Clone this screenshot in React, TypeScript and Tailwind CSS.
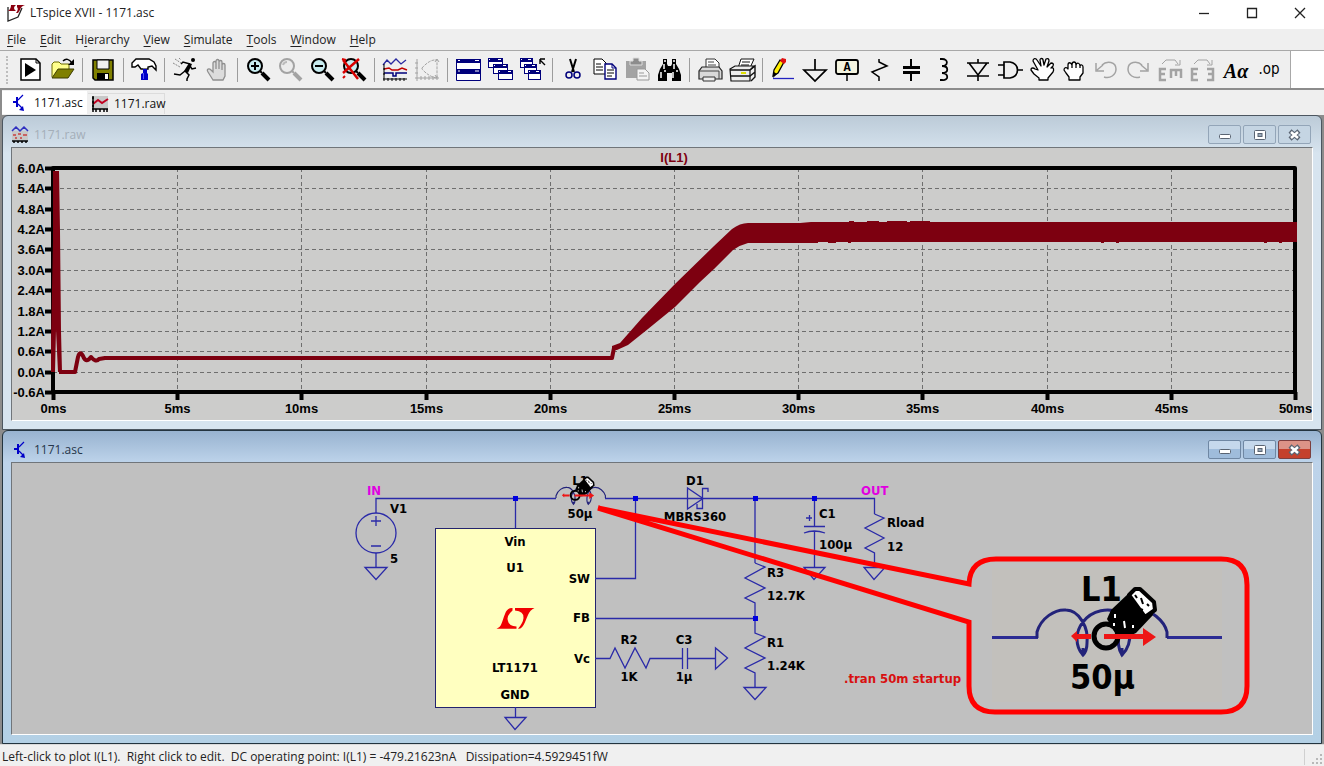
import type { ReactNode } from "react";
import clsx from "clsx";

type ToolDef = { name: string; icon: ReactNode; disabled?: boolean };

const NAVY = "#00007b";
const GREY = "#a3a3a3";
const WIRE = "#2a2aa8";
const TRACE = "#7d0010";

const menus = [
  ["", "F", "ile"],
  ["", "E", "dit"],
  ["H", "i", "erarchy"],
  ["", "V", "iew"],
  ["", "S", "imulate"],
  ["", "T", "ools"],
  ["", "W", "indow"],
  ["", "H", "elp"],
];

/* ---------- Toolbar icons, all on a 24x24 grid ---------- */

const Lens = ({ color = "#000", glass = "#c8ecf0", children }: { color?: string; glass?: string; children?: ReactNode }) => (
  <>
    <circle cx="9" cy="8" r="7" fill={glass} stroke={color} strokeWidth="2" />
    <path d="M14 13l2 2" stroke={color} strokeWidth="2" />
    <path d="M16 15l7 7" stroke={color} strokeWidth="4" />
    {children}
  </>
);

const MiniWin = ({ x, y, w = 14 }: { x: number; y: number; w?: number }) => (
  <>
    <rect x={x + 0.5} y={y + 0.5} width={w} height="9" fill="#fff" stroke={NAVY} />
    <rect x={x} y={y} width={w + 1} height="4" fill={NAVY} />
    <path d={`M${x + w - 4} ${y + 1.5}h3M${x + 1} ${y + 1.5}h1`} stroke="#fff" />
  </>
);

const groups: ToolDef[][] = [
  [
    {
      name: "Run script",
      icon: (
        <>
          <path d="M3 1h15l4 4v17H3z" fill="#fff" stroke="#000" strokeWidth="1.5" />
          <path d="M18 1v4h4" fill="none" stroke="#000" />
          <path d="M7 5v14l11-7z" />
        </>
      ),
    },
    {
      name: "Open",
      icon: (
        <>
          <path d="M2 19V6l2-2h5l2 2h8v5" fill="#ffff8c" stroke="#6b6b00" />
          <path d="M2 20l6-9h16l-6 9z" fill="#808000" stroke="#3c3c00" />
          <path d="M13 3c3-3 6-2 9 2" fill="none" stroke="#000" strokeWidth="1.5" />
          <path d="M24 1v6h-6z" />
        </>
      ),
    },
  ],
  [
    {
      name: "Save",
      icon: (
        <>
          <path d="M2 2h20v20H4l-2-2z" fill="#808000" stroke="#000" strokeWidth="1.5" />
          <path d="M6 2h12v9H6z" fill="#efefef" stroke="#000" />
          <path d="M6 15h12v7H6z" />
          <path d="M14 16h3v5h-3z" fill="#fff" />
        </>
      ),
    },
  ],
  [
    {
      name: "Control panel",
      icon: (
        <>
          <path d="M0 9V5l4-4h13l5 3 2 4v4l-4-4-4 1v2H9L6 7 3 9z" fill="#fff" stroke="#000" strokeWidth="1.4" />
          <path d="M11 10h4v4h-4z" fill="#777" />
          <path d="M11 11h4v4l1 1v6H9v-6l2-1z" fill="#0000c8" />
          <path d="M11.5 15v6" stroke="#5050ff" />
        </>
      ),
    },
  ],
  [
    {
      name: "Run",
      icon: (
        <>
          <circle cx="20" cy="2" r="2" />
          <path d="M16 5l3 1-4 9-4-2z" />
          <path d="M17 6L10 4 8 6M17 8l2 3 4-1M12 13l4 4-2 4v2M12 13l-5 4-6-1" fill="none" stroke="#000" strokeWidth="1.5" />
          <path d="M2 1l6 4M0 5l7 4M6 0l2 2" stroke="#888" strokeDasharray="2 1" />
        </>
      ),
    },
    {
      name: "Halt",
      disabled: true,
      icon: (
        <path
          d="M8 22L3 14c-2-3 1-4 3-2l2 2V5c0-2 3-2 3 0v6V3c0-2 3-2 3 0v8V4c0-2 3-2 3 0v8V7c0-2 3-2 3 0v11l-2 4z"
          fill="#dcdcdc"
          stroke="#8f8f8f"
          strokeWidth="1.3"
        />
      ),
    },
  ],
  [
    { name: "Zoom in", icon: <Lens><path d="M5 8h8M9 4v8" stroke="#000" strokeWidth="2" /></Lens> },
    { name: "Pan", disabled: true, icon: <Lens color={GREY} glass="#ececec"><path d="M5 7q1-3 4-3" fill="none" stroke="#bbb" strokeWidth="2" /></Lens> },
    { name: "Zoom back", icon: <Lens><path d="M5 8h8" stroke="#000" strokeWidth="2" /></Lens> },
    {
      name: "Zoom full extents",
      icon: (
        <Lens>
          <path d="M1 2l15 19M17 1L1 15" stroke="#d80000" strokeWidth="2.5" />
          <path d="M0 1l4 1M3 18l-2 2" stroke="#d80000" strokeWidth="2" />
        </Lens>
      ),
    },
  ],
  [
    {
      name: "Autorange",
      icon: (
        <>
          <path d="M0 7l4-5 4 4 5-5 5 5 5-4" fill="none" stroke="#2929a0" strokeWidth="1.3" />
          <path d="M1 11l5-1 3 2h6l4-2 5 2" fill="none" stroke="#c00000" strokeWidth="1.5" />
          <path d="M1 15h9v3h3v-3h11" fill="none" stroke={NAVY} strokeWidth="1.5" />
          <path d="M1 6v17M0 21h24M5 20v3M9 20v3M13 20v3M17 20v3M21 20v3M0 11h2M0 16h2" stroke="#000" />
        </>
      ),
    },
    {
      name: "FFT",
      disabled: true,
      icon: (
        <>
          <path d="M7 10q8-9 15-8v18q-8-1-15-9z" fill="none" stroke={GREY} strokeDasharray="3 1" />
          <path d="M2 1v22M0 20h24M6 18v4M10 18v4M14 18v4M18 18v4M22 18v4M0 5h3M0 10h3M0 15h3M22 1l-2 3M22 1l2 3M22 20l-2-3" stroke={GREY} />
        </>
      ),
    },
  ],
  [
    {
      name: "Tile windows",
      icon: (
        <>
          <path d="M0.5 1.5h24v21h-24z" fill="#fff" stroke={NAVY} />
          <path d="M0 1h25v4H0zM0 11h25v5H0z" fill={NAVY} />
          <path d="M2 2.5h2M19 2.5h4M2 13h2M19 13h4" stroke="#fff" />
        </>
      ),
    },
    { name: "Cascade windows", icon: <><MiniWin x={0} y={0} /><MiniWin x={5} y={6} /><MiniWin x={10} y={12} /></> },
    {
      name: "Close all",
      icon: (
        <>
          <MiniWin x={0} y={0} w={12} /><MiniWin x={4} y={6} w={12} /><MiniWin x={8} y={12} w={12} />
          <path d="M20 2l5 5M20 1h5M20 1v5" stroke="#000" strokeWidth="1.4" />
        </>
      ),
    },
  ],
  [
    {
      name: "Cut",
      icon: (
        <>
          <path d="M9 1l4 13M15 1l-4 13" stroke="#000" strokeWidth="2" />
          <circle cx="8" cy="17" r="3" fill="none" stroke={NAVY} strokeWidth="1.5" />
          <circle cx="16" cy="17" r="3" fill="none" stroke={NAVY} strokeWidth="1.5" />
        </>
      ),
    },
    {
      name: "Copy",
      icon: (
        <>
          <path d="M1 1h8l4 4v11H1z" fill="#fff" stroke="#000" />
          <path d="M3 6h5M3 9h7M3 12h7" stroke="#000" />
          <path d="M12 6h7l4 4v11H12z" fill="#fff" stroke={NAVY} strokeWidth="1.4" />
          <path d="M19 6v4h4" fill="none" stroke={NAVY} />
          <path d="M14 12h7M14 15h7M14 18h5" stroke="#000" />
        </>
      ),
    },
    {
      name: "Paste",
      disabled: true,
      icon: (
        <>
          <path d="M1 3h20v17H1z" fill={GREY} />
          <path d="M8 0h6v3h3v4H5V3h3z" fill="#8c8c8c" stroke="#ddd" />
          <path d="M12 11h8l4 4v7H12z" fill="#f4f4f4" stroke="#999" />
          <path d="M14 15h5M14 18h8" stroke="#999" />
        </>
      ),
    },
    {
      name: "Find",
      icon: (
        <>
          <path d="M6 1h4v5l1 2h3l1-2V1h4v5l3 5 2 6v6h-9v-8h-5v8H1v-6l2-6 3-5z" />
          <path d="M7 3h2M16 3h2M7 6v5M17 6v5M4 14v6M8 12v2M16 14v6M20 12v2" stroke="#fff" strokeWidth="1.5" />
        </>
      ),
    },
  ],
  [
    {
      name: "Print setup",
      icon: (
        <>
          <path d="M8 9V1h9l4 4v4" fill="#fff" stroke="#333" />
          <path d="M4 9h17l3 4v8H1v-8z" fill="#d9d9d9" stroke="#222" strokeWidth="1.2" />
          <path d="M1 13h20v8M10 4h6M10 7h8" fill="none" stroke="#444" />
          <path d="M5 19h12v4H5z" fill="#eee" stroke="#333" />
        </>
      ),
    },
    {
      name: "Print",
      icon: (
        <>
          <path d="M8 10l3-9h13l-4 9" fill="#fff" stroke="#111" />
          <path d="M12 4h8M11 7h8" stroke="#111" />
          <path d="M0 11l5-3h19l-4 4v11H1z" fill="#ececec" stroke="#111" strokeWidth="1.2" />
          <path d="M0 12h20M0 18h20l5-4M20 12l5-4v11l-4 4" fill="none" stroke="#111" strokeWidth="1.4" />
          <path d="M11 15h5" stroke="#e0e000" strokeWidth="2" />
        </>
      ),
    },
  ],
  [
    {
      name: "Draw wire",
      icon: (
        <>
          <path d="M2 18L3 12 9 2l4 2-6 11z" fill="#ffee00" stroke="#000" strokeWidth="1.3" />
          <path d="M9 3l2-3 4 1v3l-2 2z" fill="#e01010" />
          <path d="M2 20l1-6 3 2z" />
          <path d="M2 20.500h21" stroke="#2222c0" strokeWidth="1.3" />
        </>
      ),
    },
    { name: "Place ground", icon: <path d="M12 1v11M1 12h22L12 23z" fill="none" stroke="#000" strokeWidth="1.7" /> },
    {
      name: "Label net",
      icon: (
        <>
          <rect x="1" y="2" width="22" height="14" rx="2" fill="#f4f4e0" stroke="#000" strokeWidth="1.8" />
          <path d="M12 16v7" stroke="#000" strokeWidth="1.5" />
          <text x="12" y="13" textAnchor="middle" className="font-['Liberation_Mono'] text-[12px] font-bold">A</text>
        </>
      ),
    },
    { name: "Resistor", icon: <path d="M12 1v3l8 4L5 14l7 5v4" fill="none" stroke="#000" strokeWidth="1.5" /> },
    { name: "Capacitor", icon: <><path d="M12 1v8M12 15v8" stroke="#000" strokeWidth="2" /><path d="M4 9.500h17M4 14.500h17" stroke="#000" strokeWidth="3" /></> },
    { name: "Inductor", icon: <path d="M9 1h2c7 0 6 7 0 7 7 0 7 7 0 7 7 0 7 8 0 7H9" fill="none" stroke="#000" strokeWidth="1.8" /> },
  ],
  [
    { name: "Diode", icon: <path d="M12 1v4M12 17v6M1 5h22M3 5l9 12 9-12M1 18h22" fill="none" stroke="#000" strokeWidth="1.6" /> },
    { name: "Component", icon: <path d="M0 7h6M0 17h6M6 4v16h6c10-2 10-14 0-16zM19 12h6" fill="none" stroke="#000" strokeWidth="1.7" /> },
    {
      name: "Move",
      icon: (
        <path
          d="M9 22v-2l-5-4-3-4c0-3 3-2 4-1l3 1-5-9c0-3 3-3 4-1l4 6-1-6c0-2 3-2 3 0l1 5 2-6c2-1 3 0 3 2l-2 6 4-4c2 0 3 1 2 3l-2 2c3-1 3 2 2 4l-5 6v2z"
          fill="#fff"
          stroke="#000"
          strokeWidth="1.3"
          strokeLinejoin="round"
        />
      ),
    },
    {
      name: "Drag",
      icon: (
        <path
          d="M7 22v-3l-3-4-2-3c0-3 3-3 4-1V7c0-3 3-3 4 0 0-4 4-4 4 0 1-3 4-2 4 1 1-2 3-1 3 1v6l-3 4v3zM10 6v4M14 6v4M18 7v3"
          fill="#fff"
          stroke="#000"
          strokeWidth="1.3"
          strokeLinejoin="round"
        />
      ),
    },
    {
      name: "Undo",
      disabled: true,
      icon: <><path d="M8 7c5-5 14-3 14 4 0 6-6 10-12 8" fill="none" stroke={GREY} strokeWidth="1.5" /><path d="M2 5v8h8M3 12l6-5" fill="none" stroke={GREY} strokeWidth="1.5" /></>,
    },
    {
      name: "Redo",
      disabled: true,
      icon: <><path d="M16 7C11 2 2 4 2 11c0 6 6 10 12 8" fill="none" stroke={GREY} strokeWidth="1.5" /><path d="M22 5v8h-8M21 12l-6-5" fill="none" stroke={GREY} strokeWidth="1.5" /></>,
    },
    {
      name: "Rotate",
      disabled: true,
      icon: <><path d="M8 11H2v11h6M2 16h5M12 12h12M13 11v9M18 11v7M23 11v9" fill="none" stroke={GREY} strokeWidth="2.5" /><path d="M4 6l4-4h9l3 4M22 2v5h-5" fill="none" stroke={GREY} /></>,
    },
    {
      name: "Mirror",
      disabled: true,
      icon: <><path d="M8 11H2v11h6M2 16h5M17 11h6v11h-6M23 16h-5" fill="none" stroke={GREY} strokeWidth="2.5" /><path d="M4 6l4-4h9l3 4M22 2v5h-5" fill="none" stroke={GREY} /></>,
    },
    {
      name: "Text",
      icon: <text x="14" y="20" textAnchor="middle" className="font-['Liberation_Serif'] text-[20px] font-bold italic">Aα</text>,
    },
    {
      name: "SPICE directive",
      icon: <text x="15" y="16" textAnchor="middle" className="font-['DejaVu_Sans_Condensed'] text-[15px]">.op</text>,
    },
  ],
];

const ToolButton = ({ name, icon, disabled }: ToolDef) => (
  <button type="button" aria-label={name} disabled={disabled} className="flex h-8 w-8 shrink-0 items-center justify-center">
    <svg viewBox="0 0 24 24" className="size-6 overflow-visible">{icon}</svg>
  </button>
);

const Toolbar = () => (
  <div className="flex h-10 border-t border-b-2 border-t-[#a8a8a8] border-b-[#8c8c8c] bg-white">
    <div className="flex items-center border-r border-[#a8a8a8] bg-[#efefef] pr-2">
      <div className="mx-[6px] h-7 border-l-2 border-dotted border-[#bdbdbd]" />
      {groups.map((group, i) => (
        <div key={i} className="flex items-center">
          {i > 0 && i < 10 && <div className="mx-1 h-6 w-px bg-[#9c9c9c]" />}
          <div className={clsx("flex", i === 10 && "pl-[3px]")}>
            {group.map((tool) => (
              <ToolButton key={tool.name} {...tool} />
            ))}
          </div>
        </div>
      ))}
    </div>
  </div>
);

/* ---------- Document icons ---------- */

const SchematicIcon = () => (
  <svg viewBox="-3 0 18 18" className="size-[18px] shrink-0">
    <path d="M0 8h4M4 3v10" stroke="#0000c8" strokeWidth="2" />
    <path d="M5 6l5-5M5 10l4 4" stroke="#0000c8" strokeWidth="1.2" />
    <path d="M11 17l-5-1 4-4z" fill="#0000c8" />
  </svg>
);

const RawTabIcon = () => (
  <svg viewBox="0 0 18 18" className="size-[18px] shrink-0">
    <path d="M2 1h15v13H2z" fill="#c8c8c8" />
    <path d="M2 9l5-4 4 3 6-4" fill="none" stroke="#c00020" strokeWidth="2" />
    <path d="M2 1v16M1 14h16M1 3h2M1 7h2M1 11h2M5 14v3M9 14v3M13 14v3M16 14v3" stroke="#000" strokeWidth="1.5" />
  </svg>
);

const RawIcon = () => (
  <svg viewBox="0 0 18 18" className="size-[18px] shrink-0">
    <path d="M1 5h16v9H1z" fill="#c8c8c8" />
    <path d="M1 5l4-4 4 4 4-4 4 4" fill="none" stroke="#3030c0" strokeWidth="1.5" />
    <path d="M2 9h3M7 8h3M12 9h4M4 12h2M9 12h2" stroke="#c84040" strokeWidth="1.5" />
    <path d="M1 15h16M3 15v2M7 15v2M11 15v2M15 15v2" stroke="#000" strokeWidth="1.5" />
  </svg>
);

/* ---------- MDI child window ---------- */

type ChildWindowProps = { title: string; icon: ReactNode; active?: boolean; children: ReactNode };

const ChildWindow = ({ title, icon, active, children }: ChildWindowProps) => {
  const button = clsx(
    "flex h-[19px] w-[33px] items-center justify-center rounded-xs border",
    active
      ? "border-[#6f87a3] bg-linear-to-b from-[#c5d8ec] from-45% to-[#9fbcdb] to-50%"
      : "border-[#93a5b8] bg-[#c5d5e3]"
  );
  return (
    <section
      className={clsx(
        "rounded-t-md border px-2 pb-2",
        active
          ? "border-[#23343f] bg-linear-to-b from-[#98b3d0] via-[#bdd3ea] via-10% to-[#b3d0e5]"
          : "border-[#4c5660] bg-linear-to-b from-[#bccbd8] to-[#d7e4ef] to-12%"
      )}
    >
      <header className="flex h-[31px] items-end justify-between pr-[2px] pb-[3px]">
        <div className="flex items-center gap-[5px] text-[12px] leading-[18px]">
          {icon}
          <h2 className={active ? "text-[#26364a]" : "text-[#a4aeb8]"}>{title}</h2>
        </div>
        <div className="flex gap-[2px]">
          <button type="button" aria-label="Minimize" className={button}>
            <svg viewBox="0 0 14 12" className="h-3 w-[14px]">
              <rect x="1.500" y="5.500" width="11" height="4" rx="1" fill="#fff" stroke="#5a6472" />
            </svg>
          </button>
          <button type="button" aria-label="Restore" className={button}>
            <svg viewBox="0 0 14 12" className="h-3 w-[14px]">
              <rect x="1.500" y="1.500" width="11" height="9" rx="1" fill="#fff" stroke="#5a6472" />
              <rect x="5" y="4.500" width="4" height="3" fill="#9ab" stroke="#5a6472" />
            </svg>
          </button>
          <button
            type="button"
            aria-label="Close"
            className={clsx(
              "flex h-[19px] w-[33px] items-center justify-center rounded-xs border",
              active
                ? "border-[#7c3f3f] bg-linear-to-b from-[#dc9387] from-45% to-[#c4402c] to-50%"
                : "border-[#93a5b8] bg-[#c5d5e3]"
            )}
          >
            <svg viewBox="0 0 14 12" className="h-3 w-[14px]">
              <path d="M2 2l9 8M11 2l-9 8" stroke="#5a6472" strokeWidth="4.500" />
              <path d="M3 3l7 6M10 3l-7 6" stroke="#fff" strokeWidth="2.500" />
            </svg>
          </button>
        </div>
      </header>
      <div className="border border-t-[#70757a] border-r-white border-b-white border-l-[#70757a]">{children}</div>
    </section>
  );
};

/* ---------- Waveform plot ---------- */

const PLOT = { left: 53, right: 1295, top: 168, bottom: 392 };
const yLabels = ["6.0A", "5.4A", "4.8A", "4.2A", "3.6A", "3.0A", "2.4A", "1.8A", "1.2A", "0.6A", "0.0A", "-0.6A"];
const xLabels = ["0ms", "5ms", "10ms", "15ms", "20ms", "25ms", "30ms", "35ms", "40ms", "45ms", "50ms"];
const plotY = (i: number) => Math.round(PLOT.top + ((PLOT.bottom - PLOT.top) * i) / 11) + 0.5;
const plotX = (i: number) => Math.round(PLOT.left + ((PLOT.right - PLOT.left) * i) / 10) + 0.5;

const Waveform = () => (
  <svg viewBox="12 148 1300 272" className="block w-full bg-[#cccccb] font-['Liberation_Sans',sans-serif] text-[13px] font-bold">
    <g stroke="#6e6e6e" strokeDasharray="4 3">
      {yLabels.slice(1, 11).map((label, i) => (
        <path key={label} d={`M${PLOT.left} ${plotY(i + 1)}H${PLOT.right}`} />
      ))}
      {xLabels.slice(1, 10).map((label, i) => (
        <path key={label} d={`M${plotX(i + 1)} ${PLOT.top}V${PLOT.bottom}`} />
      ))}
    </g>
    <g stroke="#000" strokeWidth="4" fill="none">
      <path d={`M${PLOT.left} ${PLOT.top}H${PLOT.right}V${PLOT.bottom}H${PLOT.left}z`} strokeLinejoin="round" />
      {yLabels.map((label, i) => (
        <path key={label} d={`M45 ${plotY(i)}h8`} />
      ))}
      {xLabels.map((label, i) => (
        <path key={label} d={`M${plotX(i)} 392v8`} />
      ))}
    </g>
    {yLabels.map((label, i) => (
      <text key={label} x="45" y={plotY(i) + 4.5} textAnchor="end">{label}</text>
    ))}
    {xLabels.map((label, i) => (
      <text key={label} x={plotX(i)} y="413" textAnchor="middle">{label}</text>
    ))}
    <text x="674" y="162" textAnchor="middle" fill={TRACE}>I(L1)</text>
    {/* inrush spike */}
    <path d="M51 372V340l2-100V171h6l1 60 1 100 1 41h-4l-2-42-1 42z" fill={TRACE} />
    {/* soft-start ringing, then flat until regulation begins */}
    <path
      d="M59 372H75L78 357Q80 350 83 356Q86 364 91 357Q96 363 99 359L105 358H612L614 348"
      fill="none"
      stroke={TRACE}
      strokeWidth="4"
      strokeLinejoin="round"
    />
    <path
      d="M612 346L620 343 642 318 675 284 714 246 732 229Q740 223 748 223L800 223 811 222H849v-1h5v1H867v-1h12v1h8v-1h20v1h3v-1h20v1H1297V242H1282v1h-3v-1h-12v1h-3v-1H1119v1h-3v-1h-12v1h-3v-1H851v1h-3v-1H836v1h-8v-1H818v1H748Q740 245 733 250L714 269 700 282 675 307 648 329 628 345 617 350H612z"
      fill={TRACE}
    />
  </svg>
);

/* ---------- Schematic ---------- */

type Label = { x: number; y: number; text: string; anchor?: "start" | "middle" | "end" };

const labels: Label[] = [
  { x: 390, y: 513, text: "V1" },
  { x: 390, y: 563, text: "5" },
  { x: 515, y: 546, text: "Vin", anchor: "middle" },
  { x: 515, y: 572, text: "U1", anchor: "middle" },
  { x: 590, y: 583, text: "SW", anchor: "end" },
  { x: 590, y: 622, text: "FB", anchor: "end" },
  { x: 590, y: 663, text: "Vc", anchor: "end" },
  { x: 515, y: 672, text: "LT1171", anchor: "middle" },
  { x: 515, y: 699, text: "GND", anchor: "middle" },
  { x: 580, y: 485, text: "L1", anchor: "middle" },
  { x: 580, y: 518, text: "50µ", anchor: "middle" },
  { x: 629, y: 644, text: "R2", anchor: "middle" },
  { x: 629, y: 681, text: "1K", anchor: "middle" },
  { x: 684, y: 644, text: "C3", anchor: "middle" },
  { x: 684, y: 681, text: "1µ", anchor: "middle" },
  { x: 695, y: 485, text: "D1", anchor: "middle" },
  { x: 695, y: 521, text: "MBRS360", anchor: "middle" },
  { x: 819, y: 518, text: "C1" },
  { x: 819, y: 549, text: "100µ" },
  { x: 887, y: 527, text: "Rload" },
  { x: 887, y: 551, text: "12" },
  { x: 767, y: 577, text: "R3" },
  { x: 767, y: 600, text: "12.7K" },
  { x: 767, y: 647, text: "R1" },
  { x: 767, y: 670, text: "1.24K" },
];

const nodes = [[515, 498], [635, 498], [755, 498], [814, 498], [755, 618]];

/* Coil with its origin at the left terminal, 130 units long */
const Coil = () => (
  <path
    d="M0 0V-6C4-20 18-29 29-28C42-28 52-10 50 5C50 10 49 14 46 17C38 8 38-6 46-16C55-28 72-31 83-25C93-18 98 4 85 17C78 6 81-20 97-27C114-32 128-15 130-6V0M46 10v8M85 10v8"
    fill="none"
    stroke="#23237a"
    strokeWidth="3"
  />
);

/* Current-clamp cursor with the direction arrow */
const ClampProbe = () => (
  <>
    <circle cx="69" cy="-2" r="12" fill="none" stroke="#000" strokeWidth="5" />
    <path d="M70-19l4-9 18-17 22 14 2 8-17 18-13 6-9-8z" />
    <path d="M92-43l6-6 5 0 14 13 1 8-10 7z" fill="#fff" stroke="#000" strokeWidth="4" strokeLinejoin="round" />
    <path d="M78-24v4M77-15v3M87-17l1 7M96-13v3" stroke="#fff" strokeWidth="2" />
    <path d="M98-43l2 3M104-40l2 6M110-34l2 2M103-29l3 1" stroke="#000" strokeWidth="2" />
    <path d="M34-2l6-5v3h14v5H40v3zM67-4h39v-6l13 9-13 9V1H67z" fill="#ee1515" />
  </>
);

const Schematic = () => (
  <svg
    viewBox="12 463 1300 271"
    className="block w-full bg-[#c0c0c0] font-['DejaVu_Sans_Condensed','DejaVu_Sans',sans-serif] text-[13px] font-bold"
  >
    <rect x="435.500" y="528.500" width="160" height="179" fill="#ffffc0" stroke="#23236e" />
    <g fill="none" stroke={WIRE} strokeWidth="1.300">
      {/* rails and nets */}
      <path d="M376 513V498.500H556M605 498.500H755H874.500V514M515.500 498V528M595 578.500H635.500V498M595 618.500H755M755 498V563" />
      <path d="M595 658.500H610L615 648 625 668 635 648 646 668 650 658.500H682M687 658.500H715M682.500 648V669M687.500 648V669" />
      {/* V1 */}
      <circle cx="376" cy="533" r="20" />
      <path d="M376 516v10M371 521h10M371 546h10M376 553V567" />
      {/* D1 */}
      <path d="M687.500 488V509L703 498.500zM708 492V488.500H702.500V508.500H697V504" />
      {/* C1 */}
      <path d="M814.500 498V526M804 526.500H825M804 533Q814 529 825 533M814.500 531V567M809.500 515v6M806 518h6" />
      {/* Rload, R3, R1 */}
      <path d="M874.500 514L884 518 865 528 884 538 865 548 874.500 553V567" />
      <path d="M755 563L765 567 745 578 765 588 745 598 755 603V633L765 637 745 648 765 658 745 668 755 673V687" />
      {/* grounds */}
      <path d="M365 567.500h22l-11 12zM804 567.500h21l-11 12zM864 567.500h21l-11 12zM744 687.500h22l-11 12zM505 717.500h21l-11 12zM515.500 707v10M715.500 648v21l12-11z" />
    </g>
    {nodes.map(([x, y]) => (
      <rect key={`${x}-${y}`} x={x - 2} y={y - 2} width="5" height="5" fill="#0000e0" />
    ))}
    {/* Linear Technology mark */}
    <g fill="#f00000">
      <path d="M496.500 628.700C502 627 502 621 505 614Q507 608 512 608H512.500V610.500Q506 616 508 621Q509 626 516.500 626.500V628.700z" />
      <path d="M515 608H534.500Q530 610 528 615C525 622 523 628.700 519 628.700H518Q523 623 523.500 618Q524 611 515 610.500z" />
    </g>
    {labels.map(({ x, y, text, anchor }) => (
      <text key={text} x={x} y={y} textAnchor={anchor}>{text}</text>
    ))}
    <g fill="#e000e0">
      <text x="367" y="495">IN</text>
      <text x="861" y="495">OUT</text>
    </g>
    <text x="844" y="683" fill="#d81010">.tran 50m startup</text>
    <g transform="translate(556 498) scale(0.38)">
      <Coil />
    </g>
    <g transform="translate(549 496) scale(0.38)">
      <ClampProbe />
    </g>

    {/* magnified callout */}
    <rect x="992" y="568" width="230" height="134" fill="#c2c0bc" />
    <path
      d="M598 508L969 584Q970 559 996 559H1221Q1247 559 1247 585V686Q1247 712 1221 712H995Q969 712 969 686V622z"
      fill="none"
      stroke="#ff0000"
      strokeWidth="5"
    />
    <text x="1081" y="601" className="text-[34px]">L1</text>
    <text x="1070" y="689" className="text-[34px]">50µ</text>
    <path d="M992 637.500H1038M1167 637.500H1222" stroke="#2c2c94" strokeWidth="3" />
    <g transform="translate(1037 638)">
      <Coil />
      <ClampProbe />
    </g>
  </svg>
);

const App = () => (
  <div className="flex min-h-screen flex-col bg-[#efefef] font-['Open_Sans','Noto_Sans',sans-serif] text-[12px] text-[#222]">
    {/* Title bar */}
    <header className="flex h-[29px] items-center justify-between bg-white pb-[3px] pl-[7px]">
      <div className="flex items-center gap-[5px]">
        <svg viewBox="0 0 18 18" className="size-[18px]">
          <path d="M1 3v14l10-4 4-9" fill="#fff" stroke="#222" strokeWidth="1.300" />
          <path d="M4 1h5Q5 4 9 7H1Q4 5 4 1zM10 1h8Q14 2 13 6L11 9H9Q12 5 10 3z" fill="#8b0010" />
        </svg>
        <h1>LTspice XVII - 1171.asc</h1>
      </div>
      <div className="flex">
        <button type="button" aria-label="Minimize window" className="flex h-[26px] w-12 items-center justify-center">
          <svg viewBox="0 0 12 12" className="size-3"><path d="M1 6.500h10" stroke="#222" strokeWidth="1.300" /></svg>
        </button>
        <button type="button" aria-label="Maximize window" className="flex h-[26px] w-12 items-center justify-center">
          <svg viewBox="0 0 12 12" className="size-3"><path d="M1.500 1.500h9v9h-9z" fill="none" stroke="#222" strokeWidth="1.300" /></svg>
        </button>
        <button type="button" aria-label="Close window" className="flex h-[26px] w-12 items-center justify-center">
          <svg viewBox="0 0 12 12" className="size-3"><path d="M1 1l10 10M11 1L1 11" stroke="#222" strokeWidth="1.300" /></svg>
        </button>
      </div>
    </header>

    {/* Menu bar */}
    <nav className="flex h-[21px] items-center gap-[14px] px-[7px]">
      {menus.map(([before, key, after]) => (
        <button key={before + key + after} type="button">
          {before}
          <span className="underline underline-offset-2">{key}</span>
          {after}
        </button>
      ))}
    </nav>

    <Toolbar />

    {/* Document tabs */}
    <div className="flex h-[25px] items-start gap-px border-l-2 border-[#8c8c8c] pt-px text-[#111]">
      <button type="button" className="flex h-[23px] w-[85px] items-center gap-[6px] bg-white pl-2">
        <SchematicIcon />
        1171.asc
      </button>
      <button type="button" className="mt-[2px] flex h-[21px] w-[77px] items-center gap-[5px] border-t border-r border-[#dcdcdc] pl-[3px]">
        <RawTabIcon />
        1171.raw
      </button>
    </div>

    <main className="grow bg-[#8c8c8c] px-[2px]">
      <ChildWindow title="1171.raw" icon={<RawIcon />}>
        <Waveform />
      </ChildWindow>
      <ChildWindow title="1171.asc" icon={<SchematicIcon />} active>
        <Schematic />
      </ChildWindow>
    </main>

    <footer className="flex h-[22px] items-center justify-between border-t border-[#dadada] bg-[#f0f0f0] pt-[3px] pl-[2px]">
      <p className="whitespace-pre">
        {"Left-click to plot I(L1).  Right click to edit.  DC operating point: I(L1) = -479.21623nA   Dissipation=4.5929451fW"}
      </p>
      <svg viewBox="0 0 20 16" className="h-4 w-5">
        <path d="M0.500 0v16" stroke="#d0d0d0" />
        <path d="M16 5h2v2h-2zM12 9h2v2h-2zM16 9h2v2h-2zM8 13h2v2H8zM12 13h2v2h-2zM16 13h2v2h-2z" fill="#b8b8b8" />
      </svg>
    </footer>
  </div>
);

export default App;
